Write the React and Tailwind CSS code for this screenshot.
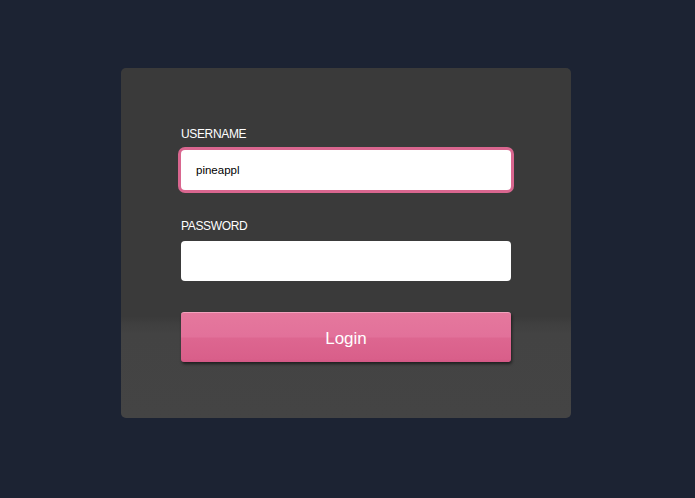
export default function App() {
  return (
    <div
      className="min-h-screen w-full bg-[#1c2333] pl-[121px] pt-[68px]"
      style={{ fontFamily: '"Liberation Sans", Arial, Helvetica, sans-serif' }}
    >
      <div className="w-[450px] h-[350px] rounded-[5px] bg-[linear-gradient(to_bottom,#3a3a3a_0%,#3a3a3a_71%,#3f3f3f_73%,#434343_76%,#444444_100%)] px-[60px] pt-[59px]">
        <label className="block text-[12px] leading-[14px] tracking-[-0.35px] text-white mb-[9px]">
          USERNAME
        </label>
        <div className="h-[40px] w-[330px] rounded-[4px] bg-white shadow-[0_0_0_3px_#d9668f] flex items-center pl-[15px] pt-[2px] text-[11.5px] text-black">
          pineappl
        </div>
        <label className="block text-[12px] leading-[14px] tracking-[-0.35px] text-white mt-[29px] mb-[8px]">
          PASSWORD
        </label>
        <div className="h-[40px] w-[330px] rounded-[4px] bg-white" />
        <button className="mt-[31px] h-[50px] w-[330px] rounded-[3px] border-t border-[#f2a3bd] bg-[linear-gradient(to_bottom,#e5789d_0%,#e2719a_48%,#dd6690_52%,#d95f8a_94%,#d35885_100%)] shadow-[1px_2px_3px_rgba(0,0,0,0.55)] text-[17px] text-white flex items-center justify-center pt-[3px]">
          Login
        </button>
      </div>
    </div>
  );
}
